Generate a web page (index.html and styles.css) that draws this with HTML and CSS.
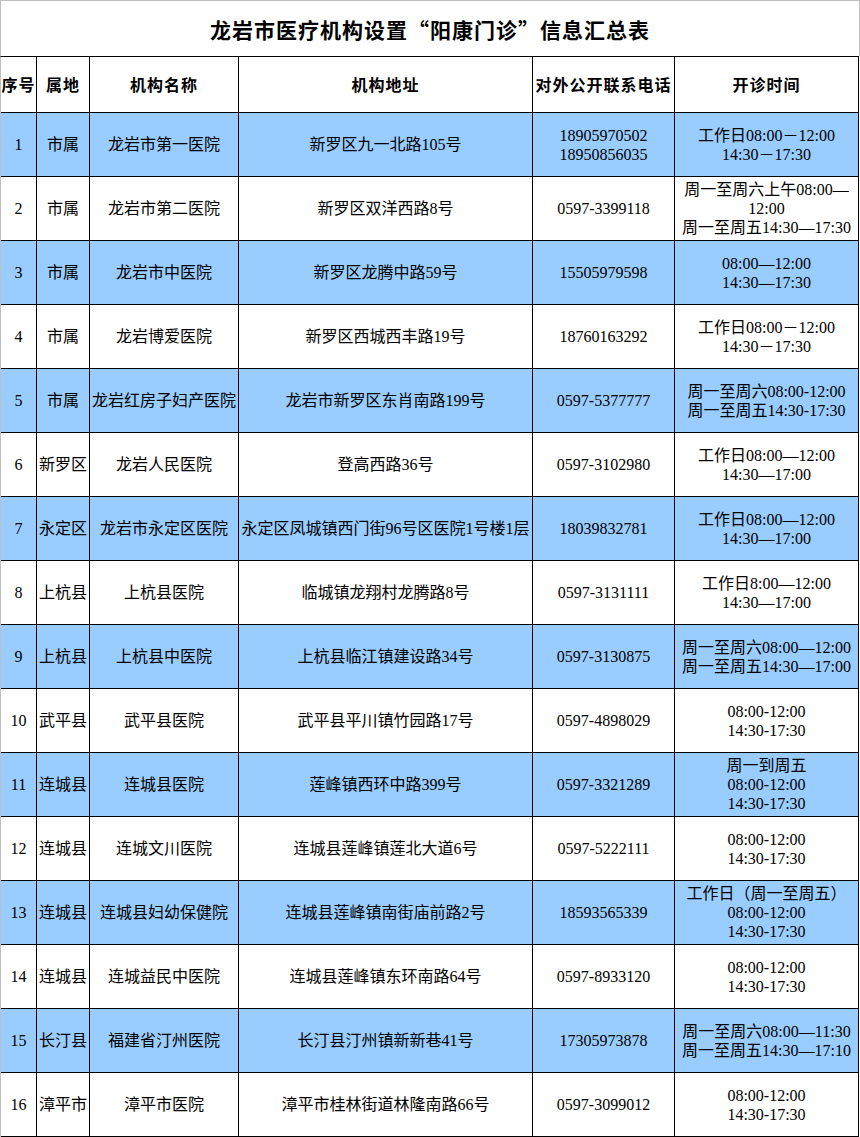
FILE: index.html
```html
<!DOCTYPE html>
<html lang="zh-CN">
<head>
<meta charset="utf-8">
<title>龙岩市医疗机构设置“阳康门诊”信息汇总表</title>
<link rel="stylesheet" href="styles.css">
</head>
<body>
<div class="sheet">
  <div class="title">龙岩市医疗机构设置“阳康门诊”信息汇总表</div>
  <div class="grid">
    <div class="c hd">序号</div><div class="c hd">属地</div><div class="c hd">机构名称</div><div class="c hd">机构地址</div><div class="c hd">对外公开联系电话</div><div class="c hd">开诊时间</div>

    <div class="c b">1</div><div class="c b">市属</div><div class="c b">龙岩市第一医院</div><div class="c b">新罗区九一北路105号</div><div class="c b">18905970502<br>18950856035</div><div class="c b">工作日08:00－12:00<br>14:30－17:30</div>

    <div class="c">2</div><div class="c">市属</div><div class="c">龙岩市第二医院</div><div class="c">新罗区双洋西路8号</div><div class="c">0597-3399118</div><div class="c">周一至周六上午08:00—<br>12:00<br>周一至周五14:30—17:30</div>

    <div class="c b">3</div><div class="c b">市属</div><div class="c b">龙岩市中医院</div><div class="c b">新罗区龙腾中路59号</div><div class="c b">15505979598</div><div class="c b">08:00—12:00<br>14:30—17:30</div>

    <div class="c">4</div><div class="c">市属</div><div class="c">龙岩博爱医院</div><div class="c">新罗区西城西丰路19号</div><div class="c">18760163292</div><div class="c">工作日08:00－12:00<br>14:30－17:30</div>

    <div class="c b">5</div><div class="c b">市属</div><div class="c b">龙岩红房子妇产医院</div><div class="c b">龙岩市新罗区东肖南路199号</div><div class="c b">0597-5377777</div><div class="c b">周一至周六08:00-12:00<br>周一至周五14:30-17:30</div>

    <div class="c">6</div><div class="c">新罗区</div><div class="c">龙岩人民医院</div><div class="c">登高西路36号</div><div class="c">0597-3102980</div><div class="c">工作日08:00—12:00<br>14:30—17:00</div>

    <div class="c b">7</div><div class="c b">永定区</div><div class="c b">龙岩市永定区医院</div><div class="c b">永定区凤城镇西门街96号区医院1号楼1层</div><div class="c b">18039832781</div><div class="c b">工作日08:00—12:00<br>14:30—17:00</div>

    <div class="c">8</div><div class="c">上杭县</div><div class="c">上杭县医院</div><div class="c">临城镇龙翔村龙腾路8号</div><div class="c">0597-3131111</div><div class="c">工作日8:00—12:00<br>14:30—17:00</div>

    <div class="c b">9</div><div class="c b">上杭县</div><div class="c b">上杭县中医院</div><div class="c b">上杭县临江镇建设路34号</div><div class="c b">0597-3130875</div><div class="c b">周一至周六08:00—12:00<br>周一至周五14:30—17:00</div>

    <div class="c">10</div><div class="c">武平县</div><div class="c">武平县医院</div><div class="c">武平县平川镇竹园路17号</div><div class="c">0597-4898029</div><div class="c">08:00-12:00<br>14:30-17:30</div>

    <div class="c b">11</div><div class="c b">连城县</div><div class="c b">连城县医院</div><div class="c b">莲峰镇西环中路399号</div><div class="c b">0597-3321289</div><div class="c b">周一到周五<br>08:00-12:00<br>14:30-17:30</div>

    <div class="c">12</div><div class="c">连城县</div><div class="c">连城文川医院</div><div class="c">连城县莲峰镇莲北大道6号</div><div class="c">0597-5222111</div><div class="c">08:00-12:00<br>14:30-17:30</div>

    <div class="c b">13</div><div class="c b">连城县</div><div class="c b">连城县妇幼保健院</div><div class="c b">连城县莲峰镇南街庙前路2号</div><div class="c b">18593565339</div><div class="c b">工作日（周一至周五）<br>08:00-12:00<br>14:30-17:30</div>

    <div class="c">14</div><div class="c">连城县</div><div class="c">连城益民中医院</div><div class="c">连城县莲峰镇东环南路64号</div><div class="c">0597-8933120</div><div class="c">08:00-12:00<br>14:30-17:30</div>

    <div class="c b">15</div><div class="c b">长汀县</div><div class="c b">福建省汀州医院</div><div class="c b">长汀县汀州镇新新巷41号</div><div class="c b">17305973878</div><div class="c b">周一至周六08:00—11:30<br>周一至周五14:30—17:10</div>

    <div class="c">16</div><div class="c">漳平市</div><div class="c">漳平市医院</div><div class="c">漳平市桂林街道林隆南路66号</div><div class="c">0597-3099012</div><div class="c">08:00-12:00<br>14:30-17:30</div>
  </div>
</div>
</body>
</html>
```

FILE: styles.css
```css
html, body {
  margin: 0;
  padding: 0;
  background: #ffffff;
}

.sheet {
  width: 860px;
  color: #000000;
}

.title {
  box-sizing: border-box;
  width: 860px;
  height: 56px;
  border-top: 1px solid #c0c0c0;
  border-left: 1px solid #c0c0c0;
  border-right: 1px solid #c0c0c0;
  display: flex;
  align-items: center;
  justify-content: center;
  font-family: "Noto Sans CJK SC", sans-serif;
  font-weight: 700;
  font-size: 21px;
  letter-spacing: 1px;
  padding-top: 1px;
}

.grid {
  display: grid;
  grid-template-columns: 36px 53px 149px 294px 142px 184px;
  grid-template-rows: 56px repeat(16, 64px);
  width: 858px;
  border-left: 1px solid #c0c0c0;
  border-top: 1px solid #000000;
}

.c {
  box-sizing: border-box;
  border-right: 1px solid #000000;
  border-bottom: 1px solid #000000;
  display: flex;
  align-items: center;
  justify-content: center;
  text-align: center;
  white-space: nowrap;
  font-family: "Liberation Serif", "Noto Sans CJK SC", sans-serif;
  font-size: 16px;
  line-height: 19px;
  overflow: hidden;
}

.hd {
  font-family: "Noto Sans CJK SC", sans-serif;
  font-weight: 700;
  font-size: 16px;
  letter-spacing: 1px;
}

.b {
  background: #99ccff;
}
```
